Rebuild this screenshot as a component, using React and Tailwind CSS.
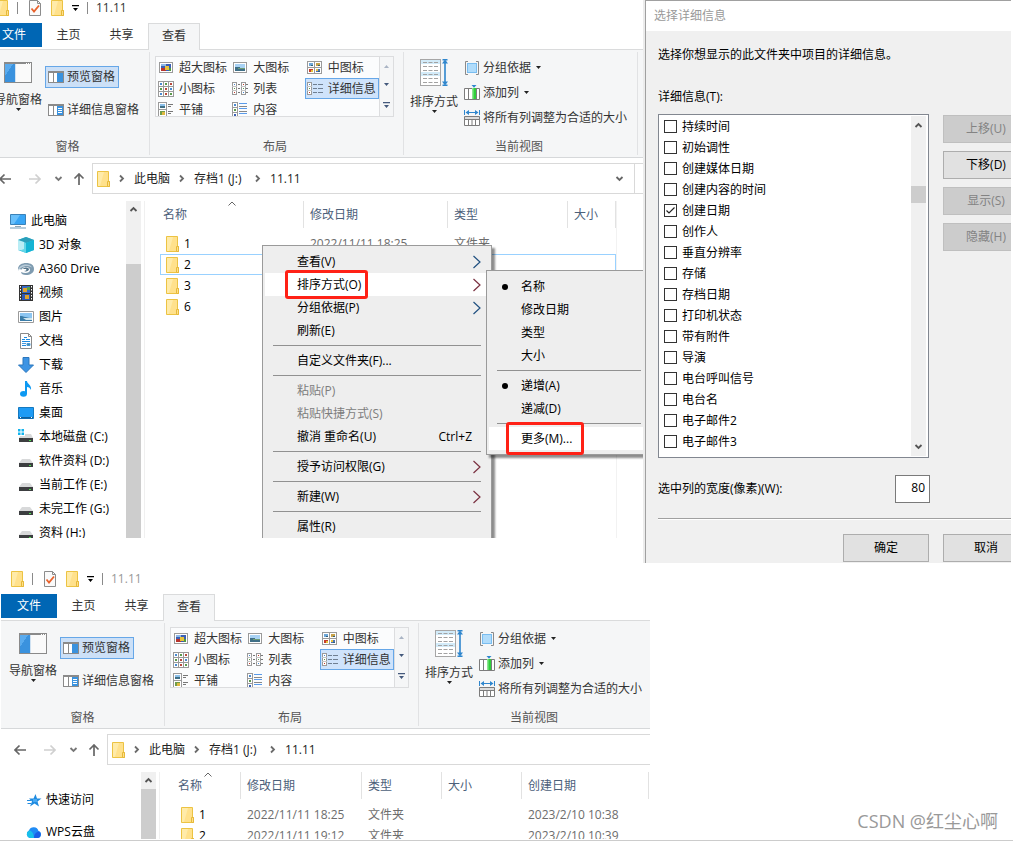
import clsx from "clsx";

/* ---------- icons ---------- */

const Folder = () => (
  <svg width="13" height="16" viewBox="0 0 13 16" className="shrink-0" aria-hidden="true">
    <path d="M0.5 0.5h11v10h1v5H0.5z" fill="#ffe18c" stroke="#ecc343" />
    <path d="M1 1h6L3 15H1z" fill="#ffeba9" />
    <path d="M10.5 15.5v-5h2v5z" fill="#ffe08a" stroke="#e6b93a" />
  </svg>
);

const CheckDoc = () => (
  <svg width="12" height="16" viewBox="0 0 12 16" aria-hidden="true">
    <path d="M0.5 0.5h8l3 3v12H0.5z" fill="#fafafa" stroke="#8c8c8c" />
    <path d="M8.5 0.5v3h3" fill="none" stroke="#8c8c8c" />
    <path d="M2.5 8.5l2.5 3 5-6" fill="none" stroke="#e8622c" strokeWidth="1.8" />
  </svg>
);

const Caret = ({ className = "text-[#222]" }) => (
  <svg width="5" height="3" viewBox="0 0 5 3" className={clsx("shrink-0", className)} aria-hidden="true">
    <path d="M0 0h5L2.5 3z" fill="currentColor" />
  </svg>
);

const CaretBar = ({ className = "text-black" }) => (
  <svg width="7" height="6" viewBox="0 0 7 6" className={className} aria-hidden="true">
    <path d="M0 0h7v1.2H0zM1 3h5L3.5 6z" fill="currentColor" />
  </svg>
);

const Chevron = ({ dir = "right", className = "text-[#6b6b6b]" }) => {
  const d = {
    right: "M2 1.5l3 3-3 3",
    down: "M1.5 3l3 3 3-3",
    up: "M1.5 6l3-3 3 3",
  }[dir];
  return (
    <svg width="9" height="9" viewBox="0 0 9 9" className={className} aria-hidden="true">
      <path d={d} fill="none" stroke="currentColor" strokeWidth="1.8" />
    </svg>
  );
};

const Arrow = ({ dir, className }) => (
  <svg width="12" height="12" viewBox="0 0 12 12" className={className} aria-hidden="true">
    <path
      d={
        dir === "left"
          ? "M12 6H1M5.5 1.5L1 6l4.5 4.5"
          : dir === "right"
            ? "M0 6h11M6.5 1.5L11 6l-4.5 4.5"
            : "M6 12V1M1.5 5.5L6 1l4.5 4.5"
      }
      fill="none"
      stroke="currentColor"
      strokeWidth="1.7"
    />
  </svg>
);

const NavPaneIcon = () => (
  <svg width="28" height="21" viewBox="0 0 28 21" shapeRendering="crispEdges" aria-hidden="true">
    <rect x="0.5" y="0.5" width="27" height="20" fill="#fafafa" stroke="#8a8a8a" />
    <path d="M0 0h28v2H0z" fill="#8a8a8a" />
    <path d="M22 1h1v1h-1zM24 1h1v1h-1zM26 1h1v1h-1z" fill="#fff" />
    <path d="M1 2h10v18H1z" fill="#3a92de" />
    <path d="M1 2h8L1 14z" fill="#5aabee" />
    <path d="M11 2h1v18h-1z" fill="#d0e2f2" />
  </svg>
);

const PaneIcon = ({ lines }) => (
  <svg width="16" height="12" viewBox="0 0 16 12" shapeRendering="crispEdges" className="shrink-0" aria-hidden="true">
    <rect x="0.5" y="0.5" width="15" height="11" fill="#fff" stroke="#8a8a8a" />
    <path d="M0 0h16v2H0zM5 2h1v9H5z" fill="#8a8a8a" />
    <path d="M9 2h6v9H9z" fill="#3a92de" />
    {lines && <path d="M10 4.5h4M10 6.5h4M10 8.5h4" stroke="#fff" />}
  </svg>
);

// small thumbnails shared by the layout icons
const Thumb = ({ x, y, w, h, tint }) => (
  <g>
    <rect x={x + 0.5} y={y + 0.5} width={w - 1} height={h - 1} fill="#fff" stroke="#9a9a9a" />
    <rect x={x + 2} y={y + 2} width={w - 4} height={h - 4} fill={tint} />
  </g>
);

const LayoutIcon = ({ kind }) => (
  <svg width="16" height="16" viewBox="0 0 16 16" shapeRendering="crispEdges" className="shrink-0" aria-hidden="true">
    {kind === "xl" && (
      <>
        <Thumb x={1} y={2} w={14} h={11} tint="#3a5fb4" />
        <path d="M3 4h5v2H3z" fill="#8cb8e8" />
        <path d="M3 8h5v3H3z" fill="#b8342c" />
        <path d="M7 6h4v4H7z" fill="#e8c23a" />
        <path d="M11 8h2v3h-2z" fill="#4c9a3c" />
      </>
    )}
    {kind === "large" && (
      <>
        <Thumb x={1} y={2} w={14} h={11} tint="#a8d2f4" />
        <path d="M3 7h3l3 1h4v3H3z" fill="#3f6f86" />
        <path d="M6 8h7v1H6z" fill="#6f9c74" />
      </>
    )}
    {kind === "medium" && (
      <>
        <path d="M0.5 1.5h14v12h-14zM7.5 1v13M0 7.5h15" fill="#fff" stroke="#9a9a9a" />
        <path d="M2 3h4v3H2z" fill="#6ea7d8" />
        <path d="M9 3h4v3H9z" fill="#c7a24a" />
        <path d="M2 9h4v3H2z" fill="#c53c2c" />
        <path d="M9 9h4v3H9z" fill="#4a72b8" />
        <path d="M4 5h2v1H4zM11 5h2v1h-2zM11 11h2v1h-2z" fill="#2f5f7a" />
        <path d="M4 10h2v2H4zM9 9h2v2H9z" fill="#e8c23a" />
      </>
    )}
    {kind === "small" && (
      <>
        <path d="M0.5 0.5h15v15h-15zM5.5 0v16M10.5 0v16M0 5.5h16M0 10.5h16" fill="#fff" stroke="#9a9a9a" />
        <path d="M2 2h2v2H2zM12 7h2v2h-2zM2 12h2v2H2z" fill="#4a8ad0" />
        <path d="M7 2h2v2H7zM2 7h2v2H2zM12 12h2v2h-2z" fill="#5a9a4c" />
        <path d="M12 2h2v2h-2zM7 7h2v2H7zM7 12h2v2H7z" fill="#b8483c" />
      </>
    )}
    {kind === "list" && (
      <>
        <path d="M0.5 1.5h4v12h-4zM9.5 1.5h4v12h-4z" fill="#fff" stroke="#9a9a9a" />
        <path d="M0 5.5h5M0 9.5h5M9 5.5h5M9 9.5h5" stroke="#c4c4c4" />
        <path d="M6 3.5h2M6 7.5h2M6 11.5h2M14 3.5h2M14 7.5h2M14 11.5h2" stroke="#777" />
        <path d="M2 3h1v1H2zM11 11h1v1h-1z" fill="#4a8ad0" />
        <path d="M2 7h1v1H2zM11 7h1v1h-1z" fill="#5a9a4c" />
        <path d="M2 11h1v1H2zM11 3h1v1h-1z" fill="#c53c2c" />
      </>
    )}
    {kind === "details" && (
      <>
        <path d="M0.5 1.5h4v12h-4z" fill="#fff" stroke="#9a9a9a" />
        <path d="M0 5.5h5M0 9.5h5" stroke="#c4c4c4" />
        <path d="M6 3.5h4M11 3.5h5M6 7.5h4M11 7.5h5M6 11.5h4M11 11.5h5" stroke="#6f7f92" />
        <path d="M2 3h1v1H2z" fill="#4a8ad0" />
        <path d="M2 7h1v1H2z" fill="#5a9a4c" />
        <path d="M2 11h1v1H2z" fill="#c53c2c" />
      </>
    )}
    {kind === "tiles" && (
      <>
        <path d="M0.5 0.5h8v14h-8zM0 7.5h9" fill="#fff" stroke="#9a9a9a" />
        <path d="M2 2h5v4H2z" fill="#8cc0ea" />
        <path d="M2 4h5v2H2z" fill="#3f6f86" />
        <path d="M2 9h5v4H2z" fill="#6f9c4a" />
        <path d="M4 10h3v3H4z" fill="#e0b840" />
        <path d="M10 2.5h5M10 4.5h3M10 9.5h5M10 11.5h3" stroke="#777" />
      </>
    )}
    {kind === "content" && (
      <>
        <path d="M0.5 0.5h5v15h-5zM0 5.5h6M0 10.5h6" fill="#fff" stroke="#9a9a9a" />
        <path d="M2 2h2v2H2z" fill="#4a8ad0" />
        <path d="M2 7h2v2H2z" fill="#5a9a4c" />
        <path d="M2 12h2v2H2z" fill="#3a5fb4" />
        <path d="M7 1.5h8M7 6.5h8M7 11.5h8" stroke="#5a9bea" />
        <path d="M7 4.5h8M7 9.5h8M7 14.5h8" stroke="#888" />
      </>
    )}
  </svg>
);

const SortIcon = () => (
  <svg width="28" height="27" viewBox="0 0 28 27" aria-hidden="true">
    <rect x="0.5" y="0.5" width="20" height="26" fill="#fff" stroke="#a6a6a6" />
    <path d="M1 1h19v4H1zM1 13h19v4H1z" fill="#d2ebf9" />
    <path
      d="M3 3.5h15M3 7.5h15M3 11.5h15M3 15.5h15M3 19.5h15M3 23.5h15"
      stroke="#a2a2a2"
      strokeDasharray="4 1.5"
    />
    <path d="M25 2v23M22.5 0.7h5M22.5 26.3h5" stroke="#2f86cd" strokeWidth="1.6" />
    <path d="M22 4.5l3-4 3 4zM22 22.5l3 4 3-4z" fill="#2f86cd" />
  </svg>
);

const GroupIcon = () => (
  <svg width="16" height="16" viewBox="0 0 16 16" className="shrink-0" aria-hidden="true">
    <path d="M4 1.5H1.5v13H4M12 1.5h2.5v13H12" fill="none" stroke="#8a8a8a" />
    <rect x="3.5" y="3.5" width="9" height="9" fill="#b0dcfb" stroke="#79bdf0" />
  </svg>
);

const AddColumnIcon = () => (
  <svg width="16" height="16" viewBox="0 0 16 16" className="shrink-0" aria-hidden="true">
    <path d="M0.5 3.5h15v11H0.5zM4.5 3.5v11M8.5 3.5v11M12.5 3.5v11" fill="#fff" stroke="#7c7c7c" />
    <path d="M8 3h4v11H8z" fill="#2fcf3a" />
    <path d="M8 3h1.5v11H8z" fill="#8be690" />
    <path d="M7.5 0h5L10 2.8z" fill="#2f86cd" />
  </svg>
);

const FitColumnsIcon = () => (
  <svg width="16" height="16" viewBox="0 0 16 16" className="shrink-0" aria-hidden="true">
    <path d="M0.5 0v5M15.5 0v5M2 2.5h12" stroke="#2f86cd" />
    <path d="M5 0L1.5 2.500 5 5zM11 0l3.500 2.500L11 5z" fill="#2f86cd" />
    <path d="M0.5 6.500h15v9H0.5z" fill="#fff" stroke="#7c7c7c" />
    <path d="M1 7h14v2H1z" fill="#dcdcdc" />
    <path d="M0 9.500h16M4.500 9.500v6M8 9.500v6M11.500 9.500v6" stroke="#7c7c7c" />
  </svg>
);

const sidebarIcons = {
  pc: (
    <>
      <path d="M0.5 1.5h15v10H0.5z" fill="#38a5f5" stroke="#3b82b8" />
      <path d="M1 2h9L4 11H1z" fill="#69c0fb" />
      <path d="M5 13h6v1H5z" fill="#8fa6b5" />
      <path d="M0 14.5h16v1H0z" fill="#6e9ab8" />
    </>
  ),
  cube: (
    <>
      <path d="M0 3l8-3 8 3v10l-8 3-8-3z" fill="#39bfdc" />
      <path d="M0 3l8-3 8 3-8 3z" fill="#2a9fba" />
      <path d="M0 3l6 2v8H0z" fill="#b9edf5" />
      <path d="M8 6l8-3v10l-8 3z" fill="#14b4d4" />
      <path d="M6 5l2 1v10l-6-2.5L6 12z" fill="#62d6e8" />
    </>
  ),
  a360: (
    <>
      <path d="M0 8c0-4 4-6 8-6 5 0 8 2 8 6 0 4-4 6-8 6-3 0-5-1-5-3 4 2 9 1 9-2 0-2-2-3-4-3S4 7 4 8.5z" fill="#7e9bb0" />
      <path d="M0 10c0-4 4-6.5 8-6.500 3 0 5 1 6 3-2-1-5-2-8-1C3 6.500 1 8 0 10z" fill="#b8cbd8" />
      <path d="M5 8c1-2 5-2 6 0 0 2-3 3-5 2 2 0 3-1 2-2z" fill="#54748a" />
    </>
  ),
  video: (
    <>
      <path d="M1 0h14v16H1z" fill="#333" />
      <path d="M4 1h8v7H4z" fill="#3569c9" />
      <path d="M4 9h8v6H4z" fill="#2e59b8" />
      <path d="M5 3h4v4H5zM7 10h4v4H7z" fill="#e0a32e" />
      <path d="M9 2h3v3H9z" fill="#56a448" />
      <path d="M2.5 1v14M13.5 1v14" stroke="#fff" strokeDasharray="1.5 1.5" />
    </>
  ),
  picture: (
    <>
      <path d="M0.5 2.5h15v11H0.5z" fill="#fff" stroke="#9a9a9a" />
      <path d="M2 4h12v8H2z" fill="#8cc6f2" />
      <path d="M2 7c4 0 6 2 12 2v3H2z" fill="#3a7ca8" />
      <path d="M5 9h9v2H8z" fill="#cfe6ee" />
    </>
  ),
  doc: (
    <>
      <path d="M2.5 0.5h8l3 3v12h-11z" fill="#fff" stroke="#8a8a8a" />
      <path d="M10.5 0.5v3h3" fill="none" stroke="#8a8a8a" />
      <path d="M4 6.5h3M6 4.5h3M8 6.5h4M4 8.5h8M4 12.5h4" stroke="#1f8be0" />
      <path d="M4 10.5h4M9 10.5h3v2H9z" fill="#4a8f9a" stroke="#4a9bdc" />
    </>
  ),
  download: <path d="M5 0.5h6V8h4.5L8 15.500 0.5 8H5z" fill="#3d94e4" stroke="#2b76bd" />,
  music: (
    <>
      <path d="M7 0h2c0 3 5 4 4 9-1-2-2-3-4-3v7H7z" fill="#0d99f2" />
      <ellipse cx="5.5" cy="12.8" rx="3.5" ry="2.9" fill="#0d99f2" />
    </>
  ),
  desktop: (
    <>
      <path d="M0.5 2.5h15v11H0.5z" fill="#1e9bf5" stroke="#1579bf" />
      <path d="M1 12h14v1.5H1z" fill="#0f5f9c" />
      <path d="M2 12h1v1H2zM13 12h1v1h-1z" fill="#fff" />
    </>
  ),
  drive: (
    <>
      <path d="M4 6h8l3 4H1z" fill="#d8d9da" />
      <path d="M1 10h14v4H1z" fill="#3c3e40" />
      <path d="M11 12h2v1h-2z" fill="#4be04b" />
    </>
  ),
  system: (
    <>
      <path d="M0 0h2.5v2.5H0zM3.5 0H6v2.5H3.5zM0 3.5h2.5V6H0zM3.5 3.5H6V6H3.5z" fill="#12b4ee" />
      <path d="M7 5h6l2 4H1l1-2h5z" fill="#d8d9da" />
      <path d="M1 9h14v4H1z" fill="#3c3e40" />
      <path d="M11 11h2v1h-2z" fill="#4be04b" />
    </>
  ),
  star: (
    <>
      <path d="M9.5 2L11 6.500h4.500l-4 3L13 14.500 8.500 11.500 4 14.500l2-5-3-3h4.500z" fill="#1f8be0" />
      <path d="M1 8.500h4M1.500 11.500H5" stroke="#1f8be0" />
      <path d="M7 7h4v3H7z" fill="#48a9f2" />
    </>
  ),
  cloud: (
    <>
      <path d="M4 14a4 4 0 0 1-1-7.5A5 5 0 0 1 12.5 7 3.6 3.6 0 0 1 12 14z" fill="#1f8bf5" />
      <path d="M4 14a4 4 0 0 1-1-7.500C5 6 8 9 8 14z" fill="#17c0ea" />
      <path d="M8 14c0-4 2-6 5-6.500a3.600 3.600 0 0 1-1 6.500z" fill="#1a5fe6" />
    </>
  ),
};

const SidebarIcon = ({ name }) => (
  <svg width="16" height="16" viewBox="0 0 16 16" className="shrink-0" aria-hidden="true">
    {sidebarIcons[name]}
  </svg>
);

/* ---------- explorer window ---------- */

const TitleBar = ({ dim }) => (
  <div className="h-[23px] pl-2.5">
    <div className="flex h-4 items-center">
      <Folder />
      <span className="mx-2 h-3 w-px bg-[#8a8a8a]" />
      <span className="ml-[3px] flex gap-2.5">
        <CheckDoc />
        <Folder />
      </span>
      <span className="ml-2 flex">
        <CaretBar />
      </span>
      <span className="mx-2 h-3 w-px bg-[#8a8a8a]" />
      <span className={dim ? "text-[#999]" : "text-[#333]"}>11.11</span>
    </div>
  </div>
);

const Tabs = () => (
  <div className="flex h-[27px] border-b border-[#dadbdc] text-[#333]" role="tablist">
    <button className="h-6 w-14 bg-[#0066b4] text-white">文件</button>
    <button className="h-6 w-[53px]">主页</button>
    <button className="h-6 w-[53px]">共享</button>
    <button className="h-[27px] w-[52px] border border-b-0 border-[#dadbdc] bg-[#f5f6f7] pb-0.5">
      查看
    </button>
  </div>
);

const RibbonGroup = ({ label, className, children }) => (
  <div className={clsx("flex shrink-0 flex-col justify-between border-r border-[#e1e2e4]", className)}>
    <div className="flex items-start">{children}</div>
    <div className="text-center leading-4 text-[#555]">{label}</div>
  </div>
);

const layouts = [
  ["xl", "超大图标"],
  ["large", "大图标"],
  ["medium", "中图标"],
  ["small", "小图标"],
  ["list", "列表"],
  ["details", "详细信息"],
  ["tiles", "平铺"],
  ["content", "内容"],
];

const Ribbon = () => (
  <div className="flex h-[108px] border-b border-[#d6d8da] bg-[#f5f6f7] py-0.5 text-[#333]">
    <RibbonGroup label="窗格" className="w-[164px]">
      <button className="ml-2 flex w-12 flex-col items-center pt-2.5">
        <NavPaneIcon />
        <span className="mt-[9px] leading-4 whitespace-nowrap">导航窗格</span>
        <Caret />
      </button>
      <div className="ml-[3px] flex flex-col gap-[11px] pt-3.5">
        <button className="flex h-[22px] w-[74px] items-center gap-[3px] border border-[#66a7e8] bg-[#cce0f7] pl-0.5 whitespace-nowrap">
          <PaneIcon />
          预览窗格
        </button>
        <button className="flex h-[22px] items-center gap-[3px] pl-[3px] whitespace-nowrap">
          <PaneIcon lines />
          详细信息窗格
        </button>
      </div>
    </RibbonGroup>

    <RibbonGroup label="布局" className="w-[254px] pt-1 pr-2 pl-[5px]">
      <div className="flex h-[61px] w-[239px] overflow-hidden border border-[#dcdddf] bg-[#fbfcfd]">
        <div className="grid flex-1 auto-rows-[21px] grid-cols-3">
          {layouts.map(([kind, label]) => (
            <button
              key={kind}
              className={clsx(
                "flex items-center gap-[5px] pl-0.5 whitespace-nowrap",
                kind === "details" && "bg-[#cfe3fb] outline -outline-offset-1 outline-[#66a7e8]"
              )}
            >
              <LayoutIcon kind={kind} />
              {label}
            </button>
          ))}
        </div>
        <div className="flex w-3.5 flex-col items-center justify-around border-l border-[#dcdddf] bg-[#f5f6f7]">
          <Caret className="rotate-180 text-[#aab4c4]" />
          <Caret className="text-[#44597c]" />
          <CaretBar className="text-[#44597c]" />
        </div>
      </div>
    </RibbonGroup>

    <RibbonGroup label="当前视图" className="w-[234px] pr-[3px]">
      <button className="ml-1.5 flex w-12 flex-col items-center pt-[7px]">
        <SortIcon />
        <span className="mt-2 leading-4 whitespace-nowrap">排序方式</span>
        <Caret />
      </button>
      <div className="ml-1.5 flex flex-col pt-[3px]">
        <button className="flex h-[25px] items-center gap-[3px]">
          <GroupIcon />
          分组依据
          <Caret className="ml-0.5 text-[#222]" />
        </button>
        <button className="flex h-[25px] items-center gap-[3px]">
          <AddColumnIcon />
          添加列
          <Caret className="ml-0.5 text-[#222]" />
        </button>
        <button className="flex h-[25px] items-center gap-[3px] whitespace-nowrap">
          <FitColumnsIcon />
          将所有列调整为合适的大小
        </button>
      </div>
    </RibbonGroup>
  </div>
);

const crumbs = [
  { label: "此电脑", width: "min-w-9" },
  { label: "存档1 (J:)", width: "min-w-[52px]" },
  { label: "11.11", width: "min-w-8" },
];

const AddressBar = ({ withRefresh }) => (
  <div className="flex pt-[5px]">
    <div className="flex w-[106px] shrink-0 items-center pl-[13px]">
      <Arrow dir="left" className="text-[#666]" />
      <Arrow dir="right" className="ml-[18px] text-[#d0d0d0]" />
      <Chevron dir="down" className="ml-[13px] text-[#777]" />
      <Arrow dir="up" className="ml-2.5 text-[#666]" />
    </div>
    <nav className="flex h-[31px] min-w-0 flex-1 items-center border border-r-0 border-[#d9d9d9] pl-1 text-[#222]">
      <Folder />
      {crumbs.map(({ label, width }) => (
        <span key={label} className="flex items-center whitespace-nowrap">
          <span className="flex w-6 justify-center">
            <Chevron />
          </span>
          <a href="#path" className={width}>
            {label}
          </a>
        </span>
      ))}
      {withRefresh && (
        <span className="ml-auto flex items-center self-stretch">
          <Chevron dir="down" className="mr-2.5 text-[#666]" />
          <span className="w-[9px] self-stretch border-l border-[#d9d9d9]" />
        </span>
      )}
    </nav>
  </div>
);

const Scrollbar = ({ gap }) => (
  <div className="flex w-[15px] shrink-0 flex-col self-stretch bg-[#f0f0f0]">
    <span className="flex h-[17px] shrink-0 items-center justify-center">
      <Chevron dir="up" className="text-[#555]" />
    </span>
    <span className={clsx("flex-1 bg-[#cdcdcd]", gap)} />
  </div>
);

const SortMark = () => (
  <svg width="8" height="5" viewBox="0 0 8 5" className="absolute inset-x-0 top-0 mx-auto" aria-hidden="true">
    <path d="M0.5 4.5L4 1l3.5 3.5" fill="none" stroke="#666" />
  </svg>
);

const FileTable = ({ columns, rows, selected }) => (
  <table className="table-fixed border-separate border-spacing-0 text-left whitespace-nowrap">
    <colgroup>
      {columns.map((col) => (
        <col key={col.label} className={col.width} />
      ))}
    </colgroup>
    <thead>
      <tr className="h-[27px] text-[#4c607a]">
        {columns.map((col, i) => (
          <th
            key={col.label}
            className={clsx(
              "relative border-r border-[#e2e2e2] py-0 font-normal",
              i === 0 ? "pl-[3px]" : "pl-1.5"
            )}
          >
            {col.label}
            {i === 0 && <SortMark />}
          </th>
        ))}
      </tr>
    </thead>
    <tbody>
      <tr aria-hidden="true">
        <td className="h-[5px] p-0" />
      </tr>
      {rows.map((row) => (
        <tr
          key={row[0]}
          className={clsx("h-[21px]", row[0] === selected && "outline -outline-offset-1 outline-[#99d1ff]")}
        >
          {row.map((cell, i) =>
            i === 0 ? (
              <td key={i} className="p-0 pl-1.5">
                <span className="flex items-center gap-[5px]">
                  <Folder />
                  {cell}
                </span>
              </td>
            ) : (
              <td key={i} className="p-0 pl-1.5 text-[#6d6d6d]">
                {cell}
              </td>
            )
          )}
        </tr>
      ))}
    </tbody>
  </table>
);

/* ---------- context menus ---------- */

const MenuItem = ({ label, shortcut, arrow, bullet, disabled, active, marked }) => (
  <li role="none">
    <button
      role="menuitem"
      disabled={disabled}
      className={clsx(
        "relative flex h-[23px] w-full items-center pl-8 text-left whitespace-nowrap",
        active && "bg-white",
        disabled ? "text-[#7d7d7d]" : "text-black"
      )}
    >
      {bullet && <span className="absolute left-[13px] size-1.5 rounded-full bg-black" />}
      {label}
      {marked && <span className={clsx("absolute rounded-[3px] border-3 border-[#ff2116]", marked)} />}
      {shortcut && <span className="ml-auto pr-[17px]">{shortcut}</span>}
      {arrow && (
        <svg width="8" height="14" viewBox="0 0 8 14" className={clsx("mr-2 ml-auto", arrow)} aria-hidden="true">
          <path d="M0.5 1L7 7l-6.5 6" fill="none" stroke="currentColor" strokeWidth="1.2" />
        </svg>
      )}
    </button>
  </li>
);

const Menu = ({ items, className }) => (
  <ul
    role="menu"
    className={clsx(
      "absolute border border-[#9a9a9a] bg-[#eee] px-0.5 py-1 shadow-[3px_3px_2px_rgba(0,0,0,0.45)]",
      className
    )}
  >
    {items.map((item, i) =>
      item === "-" ? (
        <li key={i} role="separator" className="flex h-[7px] items-center px-2">
          <span className="h-px flex-1 bg-[#919191]" />
        </li>
      ) : (
        <MenuItem key={item.label} {...item} />
      )
    )}
  </ul>
);

const blue = "text-[#205080]";
const wine = "text-[#7a3040]";

const mainMenu = [
  { label: "查看(V)", arrow: blue },
  { label: "排序方式(O)", arrow: wine, active: true, marked: "-top-[3px] left-5 h-[29px] w-[83px]" },
  { label: "分组依据(P)", arrow: blue },
  { label: "刷新(E)" },
  "-",
  { label: "自定义文件夹(F)..." },
  "-",
  { label: "粘贴(P)", disabled: true },
  { label: "粘贴快捷方式(S)", disabled: true },
  { label: "撤消 重命名(U)", shortcut: "Ctrl+Z" },
  "-",
  { label: "授予访问权限(G)", arrow: wine },
  "-",
  { label: "新建(W)", arrow: wine },
  "-",
  { label: "属性(R)" },
];

const sortMenu = [
  { label: "名称", bullet: true },
  { label: "修改日期" },
  { label: "类型" },
  { label: "大小" },
  "-",
  { label: "递增(A)", bullet: true },
  { label: "递减(D)" },
  "-",
  { label: "更多(M)...", active: true, marked: "-top-[5px] left-[17px] h-[33px] w-[78px]" },
];

const places = [
  ["cube", "3D 对象"],
  ["a360", "A360 Drive"],
  ["video", "视频"],
  ["picture", "图片"],
  ["doc", "文档"],
  ["download", "下载"],
  ["music", "音乐"],
  ["desktop", "桌面"],
  ["system", "本地磁盘 (C:)"],
  ["drive", "软件资料 (D:)"],
  ["drive", "当前工作 (E:)"],
  ["drive", "未完工作 (G:)"],
  ["drive", "资料 (H:)"],
];

const SortingWindow = () => (
  <section className="relative min-w-0 flex-1 self-start overflow-hidden">
    <div className="-ml-3.5">
      <TitleBar />
      <Tabs />
      <Ribbon />
      <AddressBar withRefresh />
      <div className="flex h-[344px] overflow-hidden pt-[7px]">
        <ul className="w-[140px] shrink-0 pt-2 whitespace-nowrap">
          <li className="flex h-6 items-center gap-[5px] pl-6">
            <SidebarIcon name="pc" />
            此电脑
          </li>
          {places.map(([icon, label]) => (
            <li key={label} className="flex h-6 items-center gap-[5px] pl-8">
              <SidebarIcon name={icon} />
              {label}
            </li>
          ))}
        </ul>
        <Scrollbar gap="mt-[46px]" />
        <div className="ml-[3px] border-l border-[#f0f0f0] pl-[15px]">
          <div className="h-full border-r border-[#f2f2f2]">
            <FileTable
              selected="2"
              columns={[
                { label: "名称", width: "w-36" },
                { label: "修改日期", width: "w-36" },
                { label: "类型", width: "w-[120px]" },
                { label: "大小", width: "w-12" },
              ]}
              rows={[
                ["1", "2022/11/11 18:25", "文件夹", ""],
                ["2", "", "", ""],
                ["3", "", "", ""],
                ["6", "", "", ""],
              ]}
            />
          </div>
        </div>
      </div>
    </div>
    <Menu items={mainMenu} className="top-[245px] left-[262px] w-[230px]" />
    <Menu items={sortMenu} className="top-[270px] left-[486px] w-[166px]" />
  </section>
);

/* ---------- details dialog ---------- */

const details = [
  "持续时间",
  "初始调性",
  "创建媒体日期",
  "创建内容的时间",
  "创建日期",
  "创作人",
  "垂直分辨率",
  "存储",
  "存档日期",
  "打印机状态",
  "带有附件",
  "导演",
  "电台呼叫信号",
  "电台名",
  "电子邮件2",
  "电子邮件3",
];

const DialogButton = ({ disabled, children }) => (
  <button
    disabled={disabled}
    className={clsx(
      "h-7 w-[86px] shrink-0 border",
      disabled ? "border-[#bfbfbf] bg-[#ccc] text-[#838383]" : "border-[#adadad] bg-[#e1e1e1]"
    )}
  >
    {children}
  </button>
);

const DetailsDialog = () => (
  <section className="mr-0.5 w-[368px] shrink-0 overflow-hidden border-l-2 border-[#ececec]">
    <div className="border-t border-l border-[#a0a0a0] bg-[#f0f0f0] pb-px">
      <h2 className="h-[30px] bg-white pl-2 leading-[30px] text-[#999]">选择详细信息</h2>
      <div className="pt-3.5 pl-3 leading-5">
        <p>选择你想显示的此文件夹中项目的详细信息。</p>
        <p className="mt-[22px]">详细信息(T):</p>
        <div className="mt-[7px] flex gap-3.5">
          <div className="flex h-[344px] w-[271px] shrink-0 border border-[#828790] bg-white p-px">
            <ul className="flex-1 pl-1">
              {details.map((name) => (
                <li key={name}>
                  <label className="flex h-[21px] items-center gap-[5px]">
                    <span className="relative flex">
                      <input
                        type="checkbox"
                        defaultChecked={name === "创建日期"}
                        className="peer size-[13px] appearance-none border border-[#333] bg-white"
                      />
                      <svg
                        width="13"
                        height="13"
                        viewBox="0 0 13 13"
                        className="pointer-events-none absolute hidden peer-checked:block"
                        aria-hidden="true"
                      >
                        <path d="M2.5 6.5L5 9l5.5-5.5" fill="none" stroke="#222" strokeWidth="1.2" />
                      </svg>
                    </span>
                    {name}
                  </label>
                </li>
              ))}
            </ul>
            <div className="mr-px flex w-[15px] flex-col items-center bg-[#f0f0f0] py-[5px]">
              <Chevron dir="up" className="text-[#555]" />
              <span className="mt-14 h-[17px] w-full bg-[#cdcdcd]" />
              <Chevron dir="down" className="mt-auto text-[#555]" />
            </div>
          </div>
          <div className="flex flex-col gap-2 pt-px">
            <DialogButton disabled>上移(U)</DialogButton>
            <DialogButton>下移(D)</DialogButton>
            <DialogButton disabled>显示(S)</DialogButton>
            <DialogButton disabled>隐藏(H)</DialogButton>
          </div>
        </div>
        <div className="mt-[17px] flex w-[272px] items-center justify-between">
          <label htmlFor="column-width">选中列的宽度(像素)(W):</label>
          <input
            id="column-width"
            defaultValue="80"
            className="h-7 w-[35px] border border-[#7a7a7a] bg-white pr-1 pb-1 text-right"
          />
        </div>
        <hr className="mt-[15px] h-0.5 border-t border-b border-t-[#a0a0a0] border-b-white" />
        <div className="mt-3.5 flex gap-3.5 pl-[185px]">
          <DialogButton>确定</DialogButton>
          <DialogButton>取消</DialogButton>
        </div>
      </div>
    </div>
  </section>
);

/* ---------- second explorer window ---------- */

const ResultWindow = () => (
  <section className="min-w-0 flex-1 overflow-hidden pl-px">
    <TitleBar dim />
    <Tabs />
    <Ribbon />
    <AddressBar />
    <div className="flex h-[74px] overflow-hidden pt-[7px]">
      <ul className="w-[140px] shrink-0 pt-3 whitespace-nowrap">
        <li className="flex h-8 items-center gap-1 pl-[25px]">
          <SidebarIcon name="star" />
          快速访问
        </li>
        <li className="flex h-8 items-center gap-1 pl-[25px]">
          <SidebarIcon name="cloud" />
          WPS云盘
        </li>
      </ul>
      <Scrollbar />
      <div className="ml-[3px] border-l border-[#f0f0f0] pl-[15px]">
        <FileTable
          columns={[
            { label: "名称", width: "w-[66px]" },
            { label: "修改日期", width: "w-[121px]" },
            { label: "类型", width: "w-20" },
            { label: "大小", width: "w-20" },
            { label: "创建日期", width: "w-[127px]" },
          ]}
          rows={[
            ["1", "2022/11/11 18:25", "文件夹", "", "2023/2/10 10:38"],
            ["2", "2022/11/11 19:12", "文件夹", "", "2023/2/10 10:39"],
          ]}
        />
      </div>
    </div>
  </section>
);

export default function App() {
  return (
    <main
      lang="zh-CN"
      className="overflow-hidden bg-white font-['Open_Sans','Noto_Sans_CJK_SC',sans-serif] text-xs text-black"
    >
      <div className="flex">
        <SortingWindow />
        <DetailsDialog />
      </div>
      <div className="flex border-b border-[#ccc] pt-2 pb-px">
        <ResultWindow />
        <p className="w-[363px] shrink-0 self-end pr-[15px] pb-1 text-right text-lg text-[#999]">
          CSDN @红尘心啊
        </p>
      </div>
    </main>
  );
}
